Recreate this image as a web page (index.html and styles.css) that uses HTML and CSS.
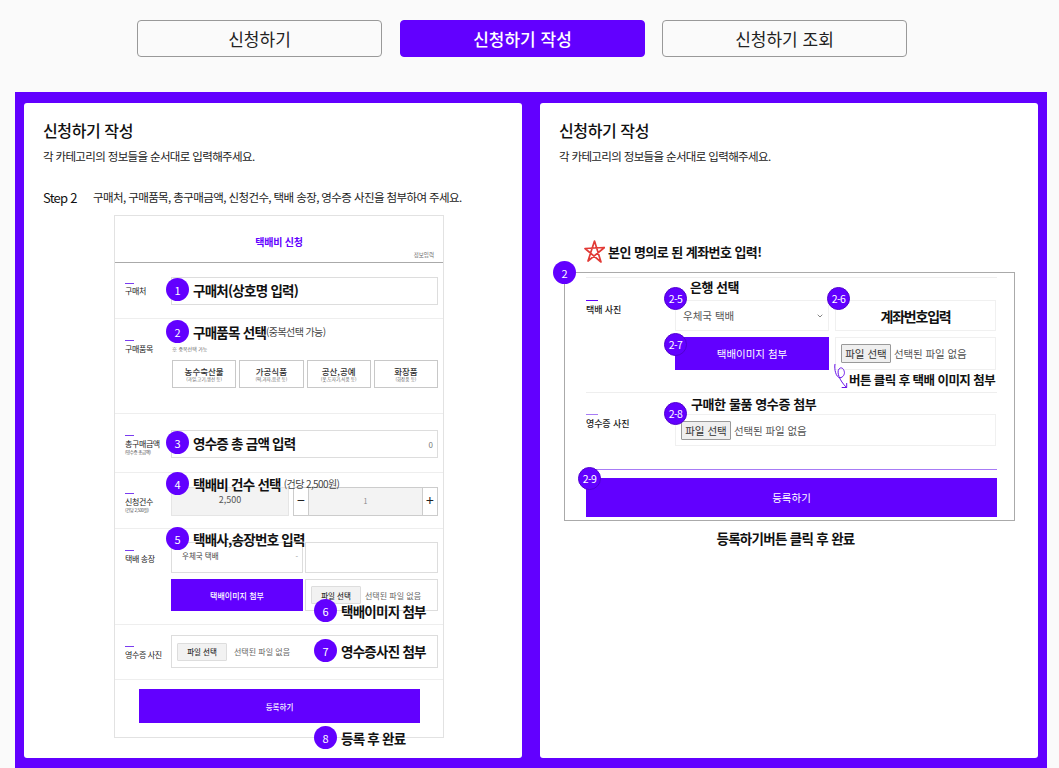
FILE: index.html
```html
<!DOCTYPE html>
<html lang="ko">
<head>
<meta charset="utf-8">
<title>신청하기 작성</title>
<link rel="stylesheet" href="styles.css">
</head>
<body>
<nav class="tabs">
  <a class="tab">신청하기</a>
  <a class="tab tab-active">신청하기 작성</a>
  <a class="tab tab-last">신청하기 조회</a>
</nav>
<main class="stage">
  <section class="panel">
    <h1 class="title">신청하기 작성</h1>
    <p class="subtitle">각 카테고리의 정보들을 순서대로 입력해주세요.</p>
    <div class="step"><span class="step-name">Step 2</span><span class="step-text">구매처, 구매품목, 총구매금액, 신청건수, 택배 송장, 영수증 사진을 첨부하여 주세요.</span></div>
    <div class="mock">
      <header class="mock-head">
        <strong class="mock-title">택배비 신청</strong>
        <span class="mock-tag">정보입력</span>
      </header>
      <div class="mrow mrow-1">
        <div class="mlabel">구매처</div>
        <div class="field field-h28"></div>
      </div>
      <div class="mrow mrow-2">
        <div class="mlabel">구매품목</div>
        <div>
          <p class="hint">※ 중복선택 가능</p>
          <div class="cards">
            <div class="card"><b>농수축산물</b><small>(과일,고기,생선 등)</small></div>
            <div class="card"><b>가공식품</b><small>(떡,과자,음료 등)</small></div>
            <div class="card"><b>공산,공예</b><small>(옷,도자기,식품 등)</small></div>
            <div class="card"><b>화장품</b><small>(화장품 등)</small></div>
          </div>
        </div>
      </div>
      <div class="mrow mrow-3">
        <div class="mlabel">총구매금액<small>(영수증 총금액)</small></div>
        <div class="field field-h28 field-amount">0</div>
      </div>
      <div class="mrow mrow-4">
        <div class="mlabel">신청건수<small>(건당 2,500원)</small></div>
        <div class="count">
          <div class="price">2,500</div>
          <div class="stepper"><span class="stepper-btn">−</span><span class="stepper-val">1</span><span class="stepper-btn">+</span></div>
        </div>
      </div>
      <div class="mrow mrow-5">
        <div class="mlabel">택배 송장</div>
        <div class="grid-ship">
          <div class="field field-select">우체국 택배<span class="caret-dot">-</span></div>
          <div class="field"></div>
          <div class="purple-btn">택배이미지 첨부</div>
          <div class="field field-file"><button class="file-btn">파일 선택</button><span>선택된 파일 없음</span></div>
        </div>
      </div>
      <div class="mrow mrow-6">
        <div class="mlabel">영수증 사진</div>
        <div class="field field-file field-wide"><button class="file-btn">파일 선택</button><span>선택된 파일 없음</span></div>
      </div>
      <div class="mrow-7"><div class="purple-btn submit-small">등록하기</div></div>

      <div class="note n1"><span class="badge">1</span><b>구매처(상호명 입력)</b></div>
      <div class="note n2"><span class="badge">2</span><b>구매품목 선택</b><small>(중복선택 가능)</small></div>
      <div class="note n3"><span class="badge">3</span><b>영수증 총 금액 입력</b></div>
      <div class="note n4"><span class="badge">4</span><b>택배비 건수 선택</b><small class="small-gap">(건당 2,500원)</small></div>
      <div class="note n5"><span class="badge">5</span><b>택배사,송장번호 입력</b></div>
      <div class="note n6"><span class="badge">6</span><b>택배이미지 첨부</b></div>
      <div class="note n7"><span class="badge">7</span><b>영수증사진 첨부</b></div>
      <div class="note n8"><span class="badge">8</span><b>등록 후 완료</b></div>
    </div>
  </section>

  <section class="panel">
    <h1 class="title">신청하기 작성</h1>
    <p class="subtitle">각 카테고리의 정보들을 순서대로 입력해주세요.</p>
    <div class="detail">
      <div class="warn">
        <svg class="star" viewBox="0 0 21 24" aria-hidden="true"><path d="M4 21 L10.500 1 L17 22 L1 8.500 L20.500 7.500 Z" fill="none" stroke="#e23a36" stroke-width="1.700" stroke-linejoin="round"/></svg>
        <b>본인 명의로 된 계좌번호 입력!</b>
      </div>
      <span class="badge badge-main">2</span>

      <div class="drow drow-a">
        <div class="dlabel">택배 사진</div>
        <div class="dgrid">
          <div class="dfield dselect">우체국 택배<svg class="chev" viewBox="0 0 6 4" aria-hidden="true"><path d="M.7.7 3 3 5.300.7" fill="none" stroke="#666" stroke-width=".8"/></svg></div>
          <div class="dfield dcenter">계좌번호입력</div>
          <div class="dbtn">택배이미지 첨부</div>
          <div class="dfield dfile"><button class="dfile-btn">파일 선택</button><span>선택된 파일 없음</span></div>
        </div>
      </div>
      <div class="drow drow-b">
        <div class="dlabel dlabel-b">영수증 사진</div>
        <div class="dfield dfile dfile-wide"><button class="dfile-btn">파일 선택</button><span>선택된 파일 없음</span></div>
      </div>
      <div class="dsubmit-line"></div>
      <div class="dsubmit">등록하기</div>

      <b class="dnote dn-bank">은행 선택</b>
      <b class="dnote dn-click">버튼 클릭 후 택배 이미지 첨부</b>
      <b class="dnote dn-receipt">구매한 물품 영수증 첨부</b>
      <span class="badge badge-s b25">2-5</span>
      <span class="badge badge-s b26">2-6</span>
      <span class="badge badge-s b27">2-7</span>
      <span class="badge badge-s b28">2-8</span>
      <span class="badge badge-s b29">2-9</span>
      <svg class="swirl" viewBox="0 0 16 26" aria-hidden="true"><path d="M2 1 C1 6 3 14.700 7 14.700 C10 14.700 12 11 11.300 8.700 C10.800 5.500 8 3.500 6 6 C3.500 9 6 17 13.700 24.700 M8.700 24.500 H13.700 V20" fill="none" stroke="#6a14e8" stroke-width="1"/></svg>
    </div>
    <p class="caption">등록하기버튼 클릭 후 완료</p>
  </section>
</main>
</body>
</html>
```

FILE: styles.css
```css
* { box-sizing: border-box; }
html, body { margin: 0; height: 768px; overflow: hidden; }
body {
  background: #fafafa;
  color: #111;
  font-family: "Noto Sans CJK KR", "Noto Sans", sans-serif;
}
p, h1 { margin: 0; }
button { font-family: inherit; padding: 0; }

.tabs { display: flex; gap: 18px; padding: 20px 0 35px 137px; }
.tab {
  width: 245px; height: 37px;
  display: flex; align-items: center; justify-content: center;
  border: 1px solid #999; border-radius: 4px;
  background: #fafafa;
  font-size: 17px; color: #222;
}
.tab-active { background: #6200ff; border-color: #6200ff; color: #fff; font-weight: 500; }
.tab-last { margin-left: -1px; }

.stage {
  margin: 0 12px 0 15px;
  height: 676px;
  background: #6200ff;
  padding: 11px 9px 10px;
  display: flex; gap: 18px;
}
.panel { width: 498px; height: 655px; background: #fff; border-radius: 3px; padding: 16px 0 0 19px; }
.title { font-size: 16px; line-height: 22px; font-weight: 500; letter-spacing: -.4px; color: #111; }
.subtitle { margin-top: 7px; font-size: 11.500px; line-height: 16px; letter-spacing: -.65px; color: #222; }
.step { margin-top: 23px; display: flex; align-items: center; height: 20px; }
.step-name { width: 50px; font-size: 13px; letter-spacing: -.75px; }
.step-text { font-size: 11.500px; letter-spacing: -.6px; color: #222; }

/* Reduced form picture */
.mock {
  position: relative;
  width: 330px; height: 523px;
  margin: 8px 0 0 71px;
  border: 1px solid #e2e2e2;
  background: #fff;
}
.mock-head { position: relative; height: 47px; border-bottom: 1px solid #aaa; text-align: center; padding-top: 19px; }
.mock-title { display: block; font-size: 10px; line-height: 13px; color: #6200ff; font-weight: 700; letter-spacing: -.2px; }
.mock-tag { position: absolute; right: 9px; top: 35px; font-size: 5.500px; line-height: 8px; color: #666; }
.mrow { display: grid; grid-template-columns: 56px 267px; border-bottom: 1px solid #eee; }
.mrow-1 { height: 56px; padding-top: 14px; --p: 8px; }
.mrow-2 { height: 95px; padding-top: 23px; --p: .5px; }
.mrow-3 { height: 59px; padding-top: 16px; --p: 7.500px; }
.mrow-4 { height: 56px; padding-top: 14px; --p: 8.500px; }
.mrow-5 { height: 96px; padding-top: 13px; --p: 10.500px; }
.mrow-6 { height: 55px; padding-top: 10px; --p: 13.500px; }
.mrow-7 { padding: 9px 23px 0 24px; }
.mlabel { padding: var(--p) 0 0 10px; position: relative; font-size: 8px; line-height: 11px; letter-spacing: -.4px; color: #222; }
.mlabel::before { content: ""; position: absolute; left: 10px; top: calc(var(--p) - 2.500px); width: 9px; height: 1px; background: #7a3cf0; }
.mlabel small { display: block; font-size: 4.500px; line-height: 7px; color: #555; }
.hint { font-size: 5px; line-height: 8px; color: #666; padding: 3px 0 0 1px; height: 18px; }
.cards { display: flex; gap: 3px; padding-left: 1px; }
.card {
  width: 64.500px; height: 28px; border: 1px solid #c8c8c8;
  display: flex; flex-direction: column; align-items: center; justify-content: center;
  color: #333; background: #fff;
}
.card b { font-size: 8.500px; line-height: 10px; font-weight: 500; }
.card small { font-size: 4.500px; line-height: 6px; color: #666; white-space: nowrap; }
.field { border: 1px solid #ddd; background: #fff; font-size: 8px; color: #444; }
.field-h28 { height: 28px; }
.field-amount { text-align: right; padding: 8px 4px 0 0; color: #777; line-height: 11px; }
.count { display: flex; gap: 4px; height: 29px; }
.price {
  width: 118px; background: #f3f3f3; border: 1px solid #e5e5e5;
  text-align: center; font-size: 9px; line-height: 24px; color: #555;
}
.stepper { width: 145px; display: flex; border: 1px solid #ccc; }
.stepper-btn { width: 14px; background: #fff; text-align: center; font-size: 14px; line-height: 25px; color: #222; }
.stepper-val { flex: 1; background: #f3f3f3; border: solid #ccc; border-width: 0 1px; text-align: center; font-size: 7px; line-height: 26px; color: #888; }
.grid-ship { display: grid; grid-template-columns: 132px 133px; grid-template-rows: 31px 32px; column-gap: 2px; row-gap: 6px; }
.field-select { display: flex; justify-content: space-between; padding: 7px 4px 0 10px; line-height: 11px; font-size: 7.500px; }
.caret-dot { color: #999; }
.purple-btn {
  background: #6200ff; color: #fff; font-size: 8px; font-weight: 500;
  display: flex; align-items: center; justify-content: center;
}
.field-file { display: flex; align-items: center; gap: 4px; padding-left: 5px; color: #666; }
.field-wide { width: 267px; height: 33px; gap: 7px; }
.file-btn { width: 50px; height: 18px; border: 1px solid #ddd; background: #f2f2f2; font-size: 7.500px; color: #333; border-radius: 1px; font-weight: 500; }
.submit-small { height: 34px; font-size: 7.500px; }

.note { position: absolute; display: flex; align-items: center; gap: 4px; white-space: nowrap; height: 23px; color: #111; left: 51px; }
.note b { font-size: 13.500px; font-weight: 700; letter-spacing: -.75px; }
.note small { font-size: 10px; color: #444; letter-spacing: -.6px; margin-left: -4px; }
.note .small-gap { margin-left: -1px; }
.badge {
  display: inline-flex; align-items: center; justify-content: center;
  width: 23px; height: 23px; border-radius: 50%; flex: none;
  background: #6200ff; color: #fff; font-size: 11px; font-weight: 400;
}
.n1 { top: 62px; }
.n2 { top: 104px; }
.n3 { top: 215px; }
.n4 { top: 256px; }
.n5 { top: 311px; }
.n6 { top: 383px; left: 199px; }
.n7 { top: 423px; left: 199px; }
.n8 { top: 510px; left: 199px; }

/* Detail picture */
.detail {
  position: relative;
  width: 451px; height: 249px;
  margin: 108px 0 0 5px;
  border: 1px solid #aaa;
  padding: 4px 17px 2px 21px;
}
.drow { border-top: 1px solid #eee; display: grid; grid-template-columns: 89px 321px; }
.drow-a { height: 115px; padding-top: 22px; }
.drow-b { height: 77px; padding-top: 21px; }
.dlabel { position: relative; padding-top: 4px; font-size: 9px; line-height: 12px; font-weight: 500; color: #222; letter-spacing: -.1px; }
.dlabel::before { content: ""; position: absolute; left: 0; top: 0; width: 12px; height: 1px; background: #6200ff; }
.dlabel-b::before { background: #a77bf5; }
.dgrid { display: grid; grid-template-columns: 154px 161px; grid-template-rows: 31px 33px; column-gap: 6px; row-gap: 6px; }
.dfield { border: 1px solid #f0f0f0; background: #fff; font-size: 10.500px; color: #555; }
.dselect { display: flex; align-items: center; justify-content: space-between; padding: 0 5px 0 7px; }
.chev { width: 6px; height: 4px; }
.dcenter { display: flex; align-items: center; justify-content: center; font-size: 14px; font-weight: 700; color: #111; letter-spacing: -1.200px; }
.dbtn { background: #6200ff; color: #fff; font-size: 10.500px; display: flex; align-items: center; justify-content: center; }
.dfile { display: flex; align-items: center; gap: 3px; padding-left: 5px; letter-spacing: -.1px; }
.dfile-btn { width: 50px; height: 19px; border: 1px solid #999; background: #efefef; font-size: 10.500px; color: #333; border-radius: 1px; }
.dfile-wide { width: 321px; height: 32px; }
.dsubmit-line { height: 1px; background: #a77bf5; }
.dsubmit {
  margin-top: 8px; height: 39px; background: #6200ff; color: #fff;
  display: flex; align-items: center; justify-content: center; font-size: 10.500px;
}
.warn { position: absolute; left: 19px; top: -33px; display: flex; align-items: center; gap: 3px; height: 23px; white-space: nowrap; }
.warn b { font-size: 13px; font-weight: 700; letter-spacing: -.55px; color: #111; }
.star { width: 21px; height: 24px; }
.badge-main { position: absolute; left: -12px; top: -12px; }
.badge-s { position: absolute; font-size: 10.500px; letter-spacing: -.6px; border: 1px solid #5000d0; }
.b25 { left: 99px; top: 14px; }
.b26 { left: 262px; top: 14px; }
.b27 { left: 99px; top: 60px; }
.b28 { left: 99px; top: 129px; }
.b29 { left: 13px; top: 194px; }
.dnote { position: absolute; font-size: 13px; line-height: 18px; letter-spacing: -.5px; color: #111; white-space: nowrap; font-weight: 700; }
.dn-bank { left: 125px; top: 5px; }
.dn-click { left: 284px; top: 98px; font-size: 12.500px; letter-spacing: -.55px; }
.dn-receipt { left: 126px; top: 122px; letter-spacing: -.4px; }
.swirl { position: absolute; left: 268px; top: 90px; width: 16px; height: 26px; }
.caption { margin: 8px 0 0 5px; width: 443px; text-align: center; font-size: 13.500px; line-height: 18px; font-weight: 700; letter-spacing: -.7px; color: #111; }
```
